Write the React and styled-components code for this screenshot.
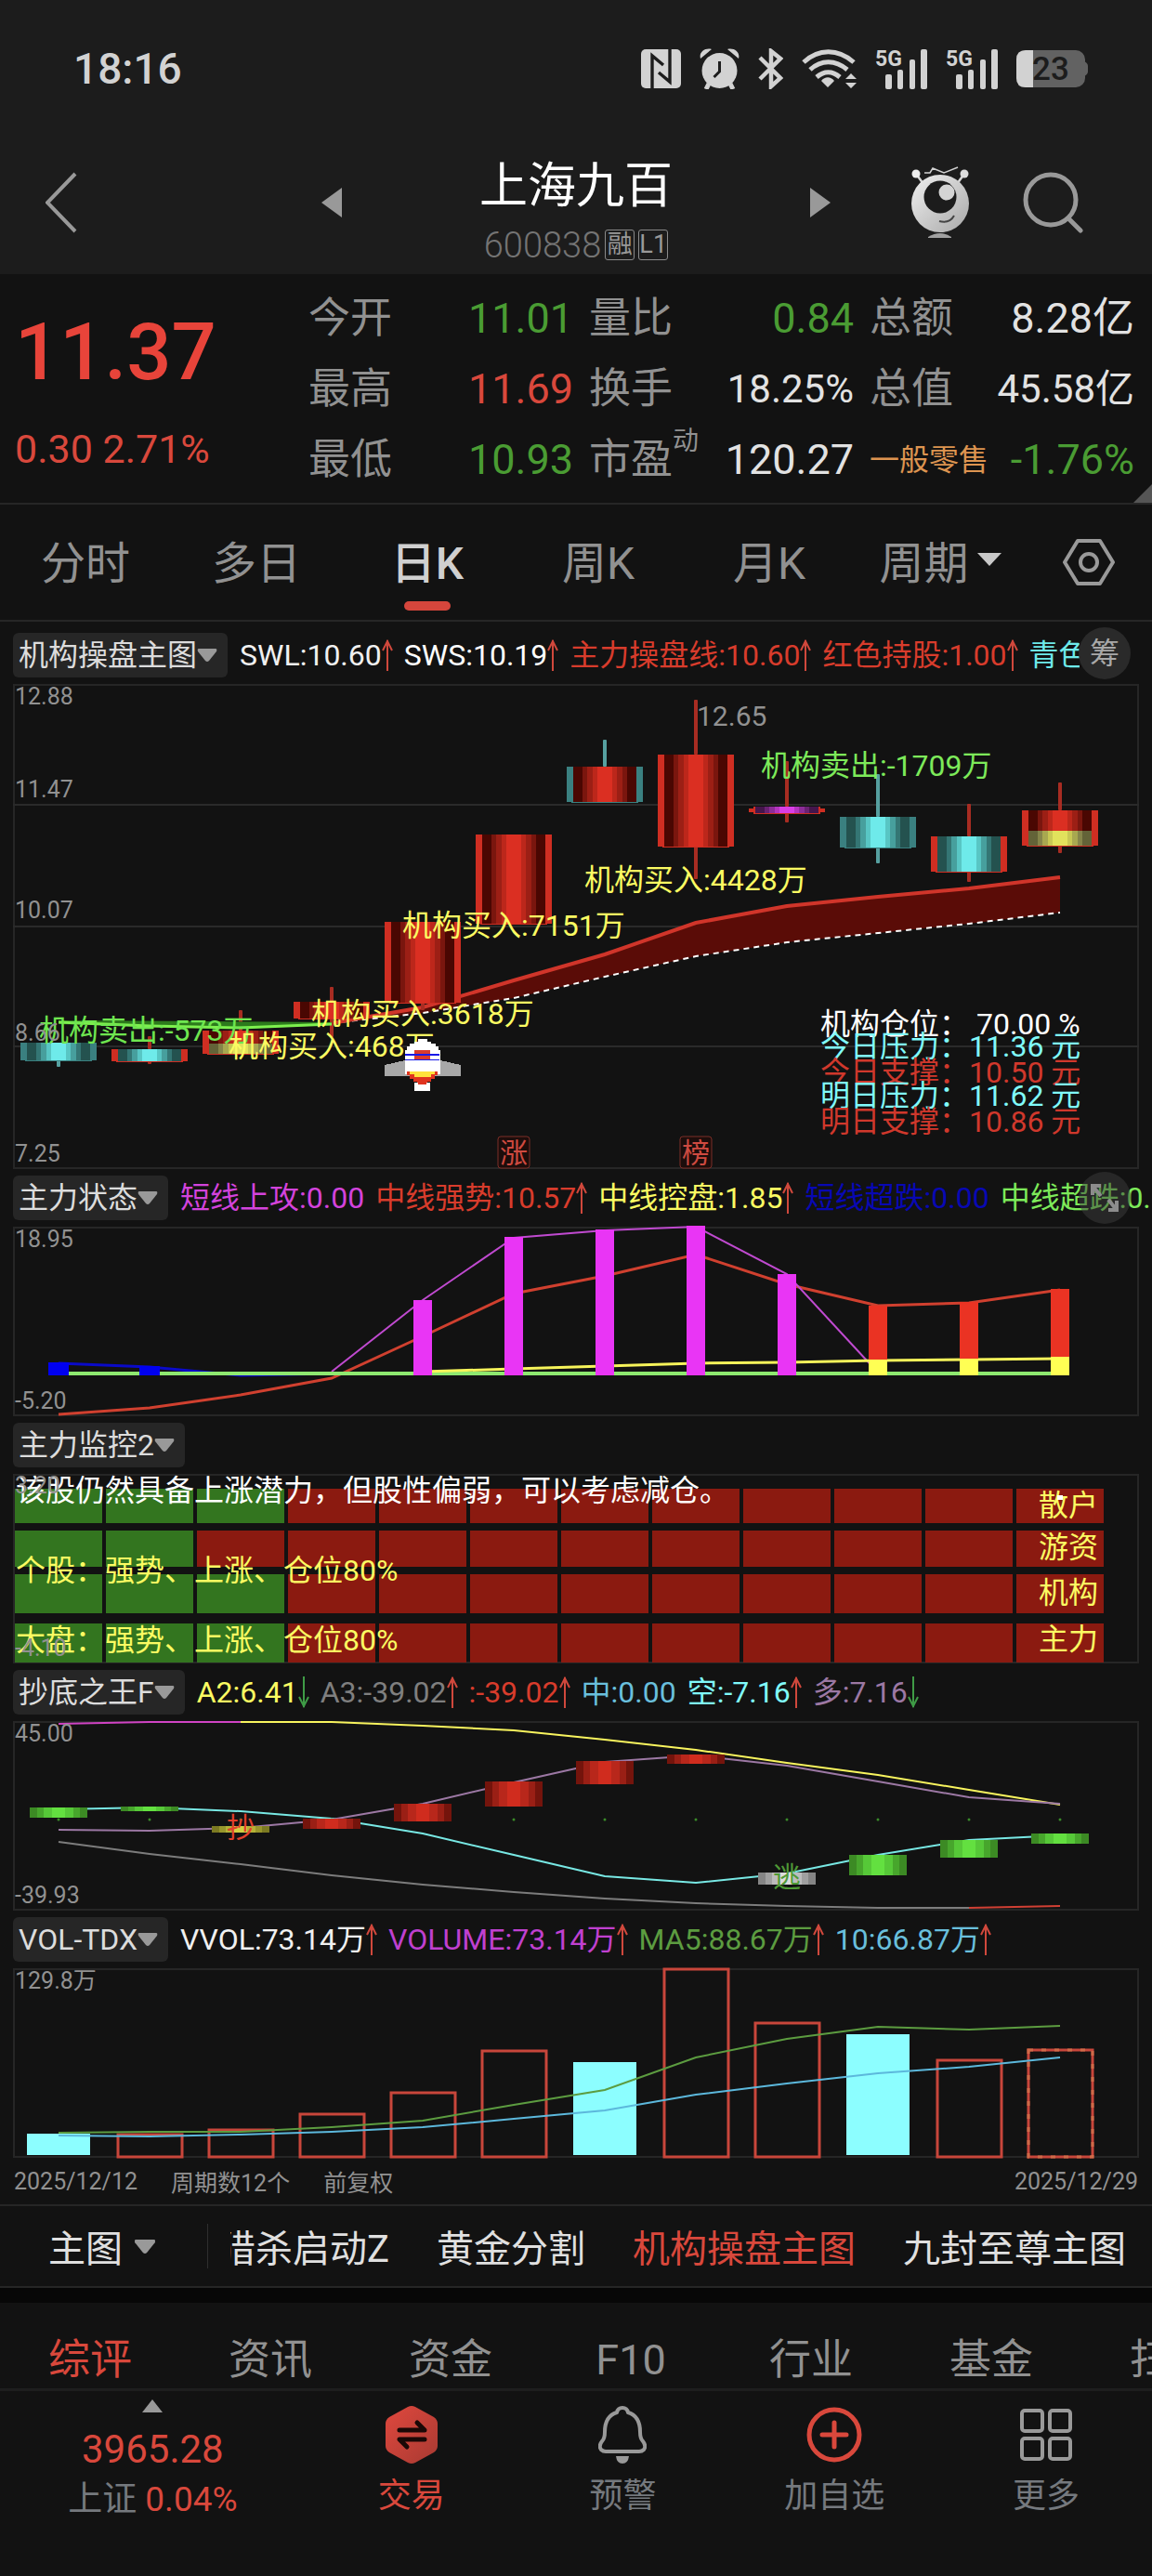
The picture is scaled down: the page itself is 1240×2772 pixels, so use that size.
import React, { useState } from 'react';
import styled, { createGlobalStyle } from 'styled-components';

const RED = '#d9483c';
const GREEN = '#4a9c33';
const GRAY = '#919191';
const CYAN = '#6eeaea';
const YELLOW = '#fbfb62';

const GlobalStyle = createGlobalStyle`
  * {
    box-sizing: border-box;
  }
  body {
    margin: 0;
    background: #121212;
    color: #e6e6e6;
    font-family: Roboto, 'Noto Sans CJK SC', sans-serif;
  }
  button {
    border: 0;
    padding: 0;
    background: none;
    color: inherit;
    font: inherit;
    white-space: nowrap;
  }
  svg {
    display: block;
    flex: none;
  }
  dl, dt, dd, p, h1 {
    margin: 0;
    font-weight: 400;
  }
`;

/* ---------- data ---------- */

const quotes = [
  { label: '今开', value: '11.01', color: GREEN },
  { label: '量比', value: '0.84', color: GREEN },
  { label: '总额', value: '8.28亿' },
  { label: '最高', value: '11.69', color: RED },
  { label: '换手', value: '18.25%', small: true },
  { label: '总值', value: '45.58亿', small: true },
  { label: '最低', value: '10.93', color: GREEN },
  { label: '市盈', sup: '动', value: '120.27' },
  { label: '一般零售', sector: true, value: '-1.76%', color: GREEN },
];

const periods = ['分时', '多日', '日K', '周K', '月K', '周期'];
const presets = ['猎杀启动Z', '黄金分割', '机构操盘主图', '九封至尊主图'];
const sections = ['综评', '资讯', '资金', 'F10', '行业', '基金', '扫雷'];

const mainItems = [
  { text: 'SWL:10.60', color: '#f0f0f0', dir: 'up' },
  { text: 'SWS:10.19', color: '#ffffff', dir: 'up' },
  { text: '主力操盘线:10.60', color: '#d83c2c', dir: 'up' },
  { text: '红色持股:1.00', color: '#d83c2c', dir: 'up' },
  { text: '青色持币:0.00', color: CYAN },
];
const stateItems = [
  { text: '短线上攻:0.00', color: '#d343dc' },
  { text: '中线强势:10.57', color: '#d83c2c', dir: 'up' },
  { text: '中线控盘:1.85', color: YELLOW, dir: 'up' },
  { text: '短线超跌:0.00', color: '#0808b4' },
  { text: '中线超跌:0.00', color: '#7dea5a' },
];
const bottomItems = [
  { text: 'A2:6.41', color: YELLOW, dir: 'down' },
  { text: 'A3:-39.02', color: '#7f7f7f', dir: 'up' },
  { text: ':-39.02', color: '#d83c2c', dir: 'up' },
  { text: '中:0.00', color: '#69bfdc' },
  { text: '空:-7.16', color: '#80fafa', dir: 'up' },
  { text: '多:7.16', color: '#9c78a4', dir: 'down' },
];
const volItems = [
  { text: 'VVOL:73.14万', color: '#f0f0f0', dir: 'up' },
  { text: 'VOLUME:73.14万', color: '#c040d0', dir: 'up' },
  { text: 'MA5:88.67万', color: '#5c9c40', dir: 'up' },
  { text: '10:66.87万', color: '#69bfdc', dir: 'up' },
];

const ramps = {
  red: ['#4a0702', '#7a160e', '#9c1f15', '#bc271b', '#db2f22'],
  cyan: ['#24524f', '#347674', '#479f9d', '#58c6c4', '#6eeaea'],
  yellow: ['#636338', '#85854a', '#a8a850', '#c8c854', '#e2e25c'],
  magenta: ['#45164c', '#6a2272', '#8d2c98', '#b434be', '#d93ee6'],
};

const candles = [
  { edge: '#3a8080', top: 386, bottom: 405, low: 412, ramp: 'cyan' },
  { edge: '#cf2e22', top: 393, bottom: 406, high: 379, low: 409, ramp: 'cyan' },
  { edge: '#cf2e22', top: 373, bottom: 398, high: 351, ramp: 'red', split: 387 },
  { edge: '#cf2e22', top: 342, bottom: 360, high: 326, low: 380, ramp: 'red' },
  { edge: '#cf2e22', top: 256, bottom: 343, low: 351, ramp: 'red' },
  { edge: '#cf2e22', top: 162, bottom: 258, ramp: 'red' },
  { edge: '#3a8080', top: 89, bottom: 127, high: 60, ramp: 'red' },
  { edge: '#cf2e22', top: 76, bottom: 175, high: 17, low: 210, ramp: 'red' },
  { edge: '#cf2e22', top: 132, bottom: 139, high: 83, low: 149, ramp: 'magenta' },
  { edge: '#3a8080', top: 143, bottom: 176, high: 97, low: 193, ramp: 'cyan' },
  { edge: '#cf2e22', top: 164, bottom: 202, high: 129, low: 213, ramp: 'cyan' },
  { edge: '#cf2e22', top: 136, bottom: 174, high: 106, low: 182, ramp: 'red', split: 158 },
];

const swl = [365, 348, 319, 291, 257, 239, 229, 220, 208];
const sws = [365, 354, 338, 315, 293, 278, 268, 258, 246];

const stateBars = [
  { i: 0, top: 146, color: '#0000f0' },
  { i: 1, top: 150, color: '#0000f0' },
  { i: 4, top: 79, color: '#e935f5' },
  { i: 5, top: 11, color: '#e935f5' },
  { i: 6, top: 3, color: '#e935f5' },
  { i: 7, top: -1, color: '#e935f5' },
  { i: 8, top: 51, color: '#e935f5' },
  { i: 9, top: 85, color: '#ea3323', base: 143 },
  { i: 10, top: 81, color: '#ea3323', base: 142 },
  { i: 11, top: 67, color: '#ea3323', base: 140 },
];

const heat = [
  { y: 16, h: 37, green: 3, label: '散户', ly: 45 },
  { y: 61, h: 39, green: 2, label: '游资', ly: 90 },
  { y: 108, h: 42, green: 3, label: '机构', ly: 139 },
  { y: 161, h: 42, green: 3, label: '主力', ly: 189 },
];

const kingRamps = {
  green: ['#3c8a24', '#47a62c', '#56c838', '#63e040'],
  red: ['#74140c', '#9a1f15', '#b8271b', '#d02c1e'],
  yellow: ['#7c7a22', '#98962c', '#b4b236', '#d2d042'],
  gray: ['#858585', '#a0a0a0', '#bcbcbc', '#dcdcdc'],
};
const kingBars = [
  [93, 104, 'green'], [92, 97, 'green'], [113, 120, 'yellow'], [105, 116, 'red'],
  [89, 108, 'red'], [65, 92, 'red'], [43, 68, 'red'], [36, 46, 'red'],
  [163, 176, 'gray'], [144, 166, 'green'], [128, 147, 'green'], [121, 132, 'green'],
];

const volumes = [
  [178, true], [178], [173], [156], [133], [88], [101, true], [0], [58], [71, true], [98], [87],
];

/* ---------- chart helpers ---------- */

const cx = (i) => 49 + 98 * i;
const points = (values, start = 0) => values.map((v, i) => `${cx(start + i)},${v}`).join(' ');

function Stripes({ left, top, height, widths, colors }) {
  let x = left;
  return widths.map((w, i) => {
    const rect = <rect key={i} x={x} y={top} width={w} height={height} fill={colors[i]} shapeRendering="crispEdges" />;
    x += w;
    return rect;
  });
}

const mirror = (ramp) => [...ramp, ...ramp.slice(0, -1).reverse()];

function Candle({ i, edge, top, bottom, high, low, ramp, split }) {
  const mid = cx(i);
  const wick = edge === '#3a8080' ? '#56a0a0' : '#a82c22';
  const widths = [10, 5, 6, 5, 16, 5, 6, 5, 10];
  return (
    <g>
      {high !== undefined && <rect x={mid - 2} y={high} width="4" height={top - high} rx="1" fill={wick} />}
      {low !== undefined && <rect x={mid - 2} y={bottom} width="4" height={low - bottom} rx="1" fill={wick} />}
      <rect x={mid - 36} y={top} width="72" height={bottom - top + 1} fill={edge} />
      <rect x={mid - 41} y={ramp === 'magenta' ? top + 2 : top} width="82" height={ramp === 'magenta' ? 4 : bottom - top} fill={edge} />
      <Stripes left={mid - 34} top={top} height={bottom - top} widths={widths} colors={mirror(ramps[ramp])} />
      {split && <Stripes left={mid - 34} top={split} height={bottom - split} widths={widths} colors={mirror(ramps.yellow)} />}
    </g>
  );
}

/* ---------- icons ---------- */

const NfcIcon = () => (
  <svg width="43" height="42" viewBox="0 0 43 42">
    <rect width="43" height="42" rx="5" fill="#d2d2d2" />
    <path d="M12 42V7l12 10M31 0v35L19 25" fill="none" stroke="#1c1c1c" strokeWidth="3.4" />
  </svg>
);

const AlarmIcon = () => (
  <svg width="43" height="44" viewBox="0 0 43 44" fill="#d2d2d2">
    <circle cx="21.500" cy="24" r="19" />
    <path d="M1 11C-1 4 6-1 13 1zM42 11C44 4 37-1 30 1z" />
    <path d="M10 38l-3 6M33 38l3 6" stroke="#d2d2d2" strokeWidth="5" />
    <path d="M21.500 14v11l-6 6" fill="none" stroke="#1c1c1c" strokeWidth="3" />
  </svg>
);

const BluetoothIcon = () => (
  <svg width="27" height="44" viewBox="0 0 27 44" fill="none" stroke="#d2d2d2" strokeWidth="4.500">
    <path d="M2 10l22 22-10 9V3l10 8L2 33" />
  </svg>
);

const WifiIcon = () => (
  <svg width="59" height="42" viewBox="0 0 59 42" fill="none" stroke="#d2d2d2" strokeWidth="5">
    <path d="M2 14C18-1 39-1 56 14M9 22c12-11 27-11 40 0M16 30c8-7 17-7 25 0" />
    <path d="M28 41l-7-7c4-5 10-5 14 0zM47 32l6-6 6 6zM47 36l6 6 6-6z" fill="#d2d2d2" stroke="none" />
  </svg>
);

const SignalIcon = () => (
  <Signal width="56" height="43" viewBox="0 0 56 43" fill="#d2d2d2">
    <text x="0" y="18" fontSize="23" fontWeight="700">5G</text>
    <rect x="11" y="27" width="7" height="16" rx="2" />
    <rect x="24" y="22" width="6" height="21" rx="2" />
    <rect x="37" y="11" width="6" height="32" rx="2" />
    <rect x="49" y="0" width="7" height="43" rx="2" />
  </Signal>
);

const BatteryIcon = () => (
  <svg width="77" height="40" viewBox="0 0 77 40">
    <rect width="74" height="40" rx="10" fill="#626262" />
    <path d="M73 12q4 2 4 5v6q0 3-4 5z" fill="#626262" />
    <path d="M18 0v40h-8Q0 40 0 30V10Q0 0 10 0z" fill="#d2d2d2" />
    <text x="17" y="32" fontSize="35" fontWeight="500" fill="#1c1c1c">23</text>
  </svg>
);

const BackIcon = () => (
  <svg width="34" height="66" viewBox="0 0 34 66">
    <path d="M32 2L2 33l30 31" fill="none" stroke="#999" strokeWidth="4" />
  </svg>
);

const RobotIcon = () => (
  <svg width="63" height="78" viewBox="0 0 63 78">
    <defs>
      <linearGradient id="shell" x1="0" y1="0" x2="1" y2="1">
        <stop offset="0" stopColor="#f0f0f0" />
        <stop offset="1" stopColor="#a8a8a8" />
      </linearGradient>
    </defs>
    <path d="M14 7h6l3-5 12 5L50 1" fill="none" stroke="#d0d0d0" strokeWidth="1.500" />
    <path d="M5 8l8 11M57 8l-8 11" stroke="#d8d8d8" strokeWidth="2.500" />
    <circle cx="5" cy="8" r="4.500" fill="#eee" />
    <circle cx="57" cy="8" r="4.500" fill="#ddd" />
    <circle cx="31" cy="40" r="31" fill="url(#shell)" />
    <circle cx="31" cy="33" r="17.500" fill="#1c1c1c" />
    <circle cx="38" cy="28" r="8.500" fill="#d4d4d4" />
    <path d="M30 59q11 3 16-6" fill="none" stroke="#444" strokeWidth="2" />
    <path d="M18 76q13-8 25 0v1H18z" fill="#a0a0a0" />
  </svg>
);

const SearchIcon = () => (
  <svg width="66" height="66" viewBox="0 0 66 66" fill="none" stroke="#999" strokeWidth="5" strokeLinecap="round">
    <circle cx="30" cy="30" r="27" />
    <path d="M49 50l13 13" />
  </svg>
);

const Triangle = ({ width = 24, height = 14, dir = 'down', color = '#999' }) => {
  const d = {
    down: `M0 0H${width}L${width / 2} ${height}z`,
    up: `M0 ${height}H${width}L${width / 2} 0z`,
    left: `M${width} 0V${height}L0 ${height / 2}z`,
    right: `M0 0V${height}L${width} ${height / 2}z`,
  }[dir];
  return (
    <svg width={width} height={height} viewBox={`0 0 ${width} ${height}`}>
      <path d={d} fill={color} />
    </svg>
  );
};

const Caret = ({ width = 22, height = 14 }) => (
  <svg width={width} height={height} viewBox="0 0 22 14">
    <path d="M2 0H20Q22 0 21 3L13 13Q11 15 9 13L1 3Q0 0 2 0z" fill="#999" />
  </svg>
);

const GearIcon = () => (
  <svg width="56" height="50" viewBox="0 0 56 50" fill="none" stroke="#999" strokeWidth="4">
    <path d="M16 2h24l14 23-14 23H16L2 25z" strokeLinejoin="round" />
    <circle cx="28" cy="25" r="9" />
  </svg>
);

const Arrow = ({ dir }) => (
  <svg width="12" height="34" viewBox="0 0 12 34" fill="none" stroke={dir === 'up' ? '#d0483c' : '#3f9c46'} strokeWidth="2">
    {dir === 'up' ? <path d="M6 34V1M1 12L6 2l5 10" /> : <path d="M6 0v33M1 22l5 10 5-10" />}
  </svg>
);

const ExpandIcon = () => (
  <svg width="30" height="30" viewBox="0 0 30 30" fill="none" stroke="#8c8c8c" strokeWidth="4">
    <path d="M2 12V2h9M28 18v10h-9M2 2l9 11M28 28l-9-11" />
  </svg>
);

const TradeIcon = () => (
  <svg width="56" height="62" viewBox="0 0 56 62">
    <defs>
      <linearGradient id="trade" x1="0" y1="0" x2="1" y2="1">
        <stop offset="0" stopColor="#e0483e" />
        <stop offset="1" stopColor="#a83a32" />
      </linearGradient>
    </defs>
    <path d="M24 1q4-2 8 0l20 11q4 3 4 7v24q0 4-4 7L32 61q-4 2-8 0L4 50q-4-3-4-7V19q0-4 4-7z" fill="url(#trade)" />
    <path d="M15 26h27L34 18M42 36H15l8 8" fill="none" stroke="#1a0806" strokeWidth="5" strokeLinecap="round" strokeLinejoin="round" />
  </svg>
);

const BellIcon = () => (
  <svg width="52" height="62" viewBox="0 0 52 62">
    <path
      d="M26 2q-5 0-6 5Q7 11 7 28q0 7-3 10-4 5-1 9 2 2 5 2h36q3 0 5-2 3-4-1-9-3-3-3-10 0-17-13-21-1-5-6-5z"
      fill="none" stroke="#999" strokeWidth="4" strokeLinejoin="round"
    />
    <path d="M19 54h14q-1 8-7 8t-7-8z" fill="#999" />
  </svg>
);

const AddIcon = () => (
  <svg width="60" height="60" viewBox="0 0 60 60" fill="none" stroke={RED} strokeWidth="5" strokeLinecap="round">
    <circle cx="30" cy="30" r="27" />
    <path d="M30 17v26M17 30h26" />
  </svg>
);

const MoreIcon = () => (
  <svg width="56" height="56" viewBox="0 0 56 56" fill="none" stroke="#999" strokeWidth="4">
    <rect x="2" y="2" width="22" height="22" rx="3" />
    <rect x="32" y="2" width="22" height="22" rx="3" />
    <rect x="2" y="32" width="22" height="22" rx="3" />
    <rect x="32" y="32" width="22" height="22" rx="3" />
  </svg>
);

/* ---------- charts ---------- */

function Frame({ height, children, label }) {
  return (
    <Chart viewBox={`0 0 1212 ${height}`} role="img" aria-label={label}>
      <rect x="1" y="1" width="1210" height={height - 2} fill="none" stroke="#262626" strokeWidth="2" />
      {children}
    </Chart>
  );
}

function MainChart() {
  const band = [...swl.map((v, i) => [cx(i + 3), v]), ...sws.map((v, i) => [cx(i + 3), v]).reverse()];
  return (
    <Frame height={522} label="机构操盘主图">
      {[130, 261, 390].map((y) => <path key={y} d={`M0 ${y}H1212`} stroke="#2a2a2a" strokeWidth="2" />)}
      <polygon points={band.map((p) => p.join(',')).join(' ')} fill="#5a0c07" />
      <polyline points={points(sws, 3)} fill="none" stroke="#fff" strokeWidth="2" strokeDasharray="6 5" />
      <polyline points={points(swl, 3)} fill="none" stroke="#d0352a" strokeWidth="4" />
      {candles.map((c, i) => <Candle key={i} i={i} {...c} />)}
      <polygon points="49,362 343,364 343,367 245,371 147,369 49,366" fill="#2c7a1c" />
      <polyline points={points([364, 368, 370, 366])} fill="none" stroke="#7df04e" strokeWidth="3" />
      <Price x="736" y="45">12.65</Price>
      <Note x="28" y="384" fill="#6fe650">机构卖出:-573万</Note>
      <Note x="232" y="401" fill={YELLOW}>机构买入:468万</Note>
      <Note x="321" y="366" fill={YELLOW}>机构买入:3618万</Note>
      <Note x="419" y="271" fill={YELLOW}>机构买入:7151万</Note>
      <Note x="615" y="222" fill={YELLOW}>机构买入:4428万</Note>
      <Note x="805" y="99" fill="#7dea5a">机构卖出:-1709万</Note>
      <g shapeRendering="crispEdges">
        <path d="M400 410L422 405H460L482 410V422H400z" fill="#a8a8a8" />
        <path d="M436 382h10v3h4v2h5v3h3v4h2v26H422V394h2v-4h3v-3h5v-2h4z" fill="#fff" />
        <rect x="432" y="394" width="17" height="11" fill="#d83a2c" />
        <rect x="422" y="398" width="37" height="2" fill="#1818e8" />
        <rect x="422" y="404" width="37" height="1" fill="#1818e8" />
        <path d="M424 417h33v4h-3v4h-4v3h-4v3h-11v-3h-4v-3h-4v-4h-3z" fill="#e0341f" />
        <path d="M427 417h27v3h-4v3h-18v-3h-5z" fill="#ffe23c" />
        <path d="M432 429h4v2h9v-2h4v9h-17z" fill="#fff" />
      </g>
      <Note x="869" y="377" fill="#ffffff">机构仓位： 70.00 %</Note>
      <Note x="869" y="401" fill="#80fafa">今日压力：11.36 元</Note>
      <Note x="869" y="429" fill="#d0382c">今日支撑：10.50 元</Note>
      <Note x="869" y="454" fill="#80fafa">明日压力：11.62 元</Note>
      <Note x="869" y="482" fill="#d0382c">明日支撑：10.86 元</Note>
      {[['涨', 5], ['榜', 7]].map(([t, i]) => (
        <g key={t}>
          <rect x={cx(i) - 17} y="487" width="34" height="34" rx="3" fill="#1d0d0b" stroke="#7c2e28" strokeWidth="1" />
          <text x={cx(i)} y="515" fontSize="30" textAnchor="middle" fill="#cf4a40">{t}</text>
        </g>
      ))}
      <Axis x="2" y="22">12.88</Axis>
      <Axis x="2" y="122">11.47</Axis>
      <Axis x="2" y="252">10.07</Axis>
      <Axis x="2" y="384">8.66</Axis>
      <Axis x="2" y="514">7.25</Axis>
    </Frame>
  );
}

function StateChart() {
  return (
    <Frame height={204} label="主力状态">
      <polyline points={points([202, 195, 181, 163, 118, 72, 53, 30, 62, 85, 82, 68])} fill="none" stroke="#d0402f" strokeWidth="3" />
      <polyline points={points([156, 79, 12, 4, 0, 51, 157], 3)} fill="none" stroke="#c04ad0" strokeWidth="2" />
      <polyline points={points([147, 151, 160, 158])} fill="none" stroke="#0a0ac8" strokeWidth="3" />
      <path d="M59 158H1127" stroke="#8ee870" strokeWidth="4" />
      <polyline points={points([156, 153, 150, 147, 146, 144, 143, 142], 4)} fill="none" stroke="#f6f45a" strokeWidth="3" />
      {stateBars.map((b) => (
        <g key={b.i}>
          <rect x={cx(b.i) - (b.i < 2 ? 11 : 10)} y={b.top} width={b.i < 2 ? 22 : 20} height={160 - b.top} fill={b.color} />
          {b.base && <rect x={cx(b.i) - 10} y={b.base} width="20" height={160 - b.base} fill="#ffff54" />}
        </g>
      ))}
      <Axis x="2" y="22">18.95</Axis>
      <Axis x="2" y="196">-5.20</Axis>
    </Frame>
  );
}

function MonitorChart() {
  return (
    <Frame height={204} label="主力监控2">
      {heat.map((row) => (
        <g key={row.label}>
          {candles.map((_, i) => (
            <rect key={i} x={2 + 98 * i} y={row.y} width="94" height={row.h} fill={i < row.green ? '#33751f' : '#8b1a10'} />
          ))}
          <Note x="1104" y={row.ly} fill={YELLOW}>{row.label}</Note>
        </g>
      ))}
      <rect x="1124" y="23" width="6" height="5" fill="#fff" />
      <Note x="3" y="29" fill="#ffffff">该股仍然具备上涨潜力，但股性偏弱，可以考虑减仓。</Note>
      <Note x="3" y="115" fill={YELLOW}>个股：强势、上涨、仓位80%</Note>
      <Note x="3" y="190" fill={YELLOW}>大盘：强势、上涨、仓位80%</Note>
      <Axis x="2" y="21">3.20</Axis>
      <Axis x="2" y="196">-4.10</Axis>
    </Frame>
  );
}

function KingChart() {
  return (
    <Frame height={204} label="抄底之王F">
      <polyline points={points([130, 143, 154, 166, 176, 184, 191, 196, 199, 201, 201])} fill="none" stroke="#7c7c7c" strokeWidth="2" />
      <polyline points={points([201, 199], 10)} fill="none" stroke="#d04034" strokeWidth="2" />
      <polyline points={points([3, 1, 1])} fill="none" stroke="#d043c4" strokeWidth="2" />
      <polyline points={points([1, 1, 5, 10, 20, 31, 45, 58, 74, 90], 2)} fill="none" stroke="#f8f45e" strokeWidth="2" />
      <polyline points={points([117, 118, 115, 106, 89, 66, 44, 37, 48, 65, 82, 89])} fill="none" stroke="#9c78a4" strokeWidth="2" />
      <polyline points={points([95, 93, 97, 105, 121, 144, 167, 174, 164, 144, 128, 123])} fill="none" stroke="#78e8e4" strokeWidth="2" />
      {kingBars.map(([top, bottom, ramp], i) => (
        <g key={i}>
          <circle cx={cx(i)} cy="106" r="1.500" fill="#3a8a2a" />
          <Stripes left={cx(i) - 31} top={top} height={bottom - top} widths={[8, 7, 9, 14, 9, 7, 8]} colors={mirror(kingRamps[ramp])} />
        </g>
      ))}
      <text x={cx(2)} y="125" fontSize="30" textAnchor="middle" fill="#e0402c">抄</text>
      <text x={cx(8)} y="178" fontSize="30" textAnchor="middle" fill="#4f9a36">逃</text>
      <Axis x="2" y="22">45.00</Axis>
      <Axis x="2" y="196">-39.93</Axis>
    </Frame>
  );
}

function VolumeChart() {
  return (
    <Frame height={204} label="VOL-TDX">
      {volumes.map(([top, filled], i) => {
        if (filled) return <rect key={i} x={cx(i) - 34} y={top} width="68" height={201 - top} fill="#8cfeff" />;
        return (
          <g key={i} fill="none" strokeWidth="3">
            <rect x={cx(i) - 34} y={top + 1} width="69" height={202 - top} stroke="#c8463b" />
            {i === 11 && <rect x={cx(i) - 34} y={top + 1} width="69" height={202 - top} stroke="#cf6a48" strokeDasharray="5 9" />}
          </g>
        );
      })}
      <polyline points={points([177, 176, 176, 171, 164, 147, 131, 96, 76, 63, 66, 62])} fill="none" stroke="#5c9c40" strokeWidth="2" />
      <polyline points={points([180, 181, 179, 176, 171, 162, 153, 136, 124, 113, 106, 96])} fill="none" stroke="#5cb8dc" strokeWidth="2" />
      <Axis x="2" y="22">129.8万</Axis>
    </Frame>
  );
}

function Panel({ title, items, clip, first, overlay, children }) {
  return (
    <section>
      <PanelHead $first={first}>
        <Chip type="button">
          {title}
          <Caret />
        </Chip>
        <Items $clip={clip}>
          {(items || []).map((item) => (
            <Item key={item.text} $color={item.color}>
              {item.text}
              {item.dir && <Arrow dir={item.dir} />}
            </Item>
          ))}
        </Items>
        {overlay}
      </PanelHead>
      <ChartWrap>{children}</ChartWrap>
    </section>
  );
}

export default function App() {
  const [period, setPeriod] = useState('日K');
  const [preset, setPreset] = useState('机构操盘主图');
  const [section, setSection] = useState('综评');

  return (
    <>
      <GlobalStyle />
      <Top>
        <StatusBar>
          <Clock>18:16</Clock>
          <StatusIcons>
            <NfcIcon />
            <AlarmIcon />
            <BluetoothIcon />
            <WifiIcon />
            <SignalIcon />
            <SignalIcon />
            <BatteryIcon />
          </StatusIcons>
        </StatusBar>
        <Header>
          <HeaderSide>
            <button type="button" aria-label="返回"><BackIcon /></button>
          </HeaderSide>
          <HeaderCenter>
            <button type="button" aria-label="上一只"><Triangle width={22} height={32} dir="left" /></button>
            <Title>
              <h1>上海九百</h1>
              <Code>
                600838 <Badge>融</Badge><Badge>L1</Badge>
              </Code>
            </Title>
            <button type="button" aria-label="下一只"><Triangle width={22} height={32} dir="right" /></button>
          </HeaderCenter>
          <HeaderSide $end>
            <button type="button" aria-label="助手"><RobotIcon /></button>
            <button type="button" aria-label="搜索"><SearchIcon /></button>
          </HeaderSide>
        </Header>
      </Top>

      <Quote>
        <div>
          <Last>11.37</Last>
          <Change>0.30 2.71%</Change>
        </div>
        <QuoteGrid>
          {quotes.map((q) => (
            <QuoteCell key={q.label}>
              <QuoteLabel $sector={q.sector}>
                {q.label}
                {q.sup && <sup>{q.sup}</sup>}
              </QuoteLabel>
              <QuoteValue $color={q.color} $small={q.small}>{q.value}</QuoteValue>
            </QuoteCell>
          ))}
        </QuoteGrid>
        <Corner />
      </Quote>

      <Periods>
        {periods.map((p) => (
          <Period key={p} type="button" $active={p === period} onClick={() => setPeriod(p)}>
            {p}
            {p === '周期' && <Triangle width={26} height={14} color="#c8c8c8" />}
          </Period>
        ))}
        <Settings type="button" aria-label="设置"><GearIcon /></Settings>
      </Periods>

      <Panel title="机构操盘主图" items={mainItems} clip first overlay={<Round type="button">筹</Round>}>
        <MainChart />
      </Panel>
      <Panel title="主力状态" items={stateItems} overlay={<Round type="button" $ghost aria-label="展开"><ExpandIcon /></Round>}>
        <StateChart />
      </Panel>
      <Panel title="主力监控2"><MonitorChart /></Panel>
      <Panel title="抄底之王F" items={bottomItems}><KingChart /></Panel>
      <Panel title="VOL-TDX" items={volItems}><VolumeChart /></Panel>

      <Dates>
        <span>2025/12/12</span>
        <span>周期数12个</span>
        <span>前复权</span>
        <span>2025/12/29</span>
      </Dates>

      <Presets>
        <PresetMenu type="button">主图<Caret width={24} height={15} /></PresetMenu>
        <PresetScroll>
          <PresetTrack>
            {presets.map((p) => (
              <Preset key={p} type="button" $active={p === preset} onClick={() => setPreset(p)}>{p}</Preset>
            ))}
          </PresetTrack>
        </PresetScroll>
      </Presets>

      <Sections>
        {sections.map((s) => (
          <SectionTab key={s} type="button" $active={s === section} onClick={() => setSection(s)}>{s}</SectionTab>
        ))}
      </Sections>

      <BottomBar>
        <IndexButton type="button">
          <Triangle width={22} height={14} dir="up" />
          <IndexValue>3965.28</IndexValue>
          <IndexName>上证 <b>0.04%</b></IndexName>
        </IndexButton>
        <Action type="button" $active><TradeIcon />交易</Action>
        <Action type="button"><BellIcon />预警</Action>
        <Action type="button"><AddIcon />加自选</Action>
        <Action type="button"><MoreIcon />更多</Action>
      </BottomBar>
    </>
  );
}

/* ---------- styles ---------- */

const Top = styled.header`
  background: #1c1c1c;
`;

const StatusBar = styled.div`
  height: 140px;
  padding: 8px 69px 0 79px;
  display: flex;
  align-items: center;
  justify-content: space-between;
`;

const Clock = styled.span`
  font-size: 46px;
  font-weight: 500;
  color: #d2d2d2;
`;

const StatusIcons = styled.div`
  display: flex;
  align-items: center;
  gap: 20px;
`;

const Signal = styled.svg`
  overflow: visible;
`;

const Header = styled.div`
  height: 155px;
  display: grid;
  grid-template-columns: 1fr 548px 1fr;
  align-items: center;
`;

const HeaderSide = styled.div`
  display: flex;
  align-items: center;
  gap: 57px;
  padding: 0 73px 0 49px;
  justify-content: ${(p) => (p.$end ? 'flex-end' : 'flex-start')};
`;

const HeaderCenter = styled.div`
  display: flex;
  align-items: center;
  justify-content: space-between;
`;

const Title = styled.div`
  padding-top: 26px;
  display: flex;
  flex-direction: column;
  align-items: center;
  h1 {
    font-size: 52px;
    line-height: 66px;
    color: #fff;
  }
`;

const Code = styled.p`
  display: flex;
  align-items: center;
  gap: 4px;
  font-size: 38px;
  font-weight: 300;
  line-height: 60px;
  color: #747474;
`;

const Badge = styled.span`
  min-width: 32px;
  height: 33px;
  border: 1px solid #8a8a8a;
  border-radius: 3px;
  text-align: center;
  font-size: 27px;
  font-weight: 400;
  line-height: 31px;
  color: #999;
`;

const Quote = styled.section`
  position: relative;
  display: grid;
  grid-template-columns: 316px 1fr;
  padding: 10px 19px 8px 16px;
  border-bottom: 2px solid #262626;
`;

const Last = styled.p`
  font-size: 85px;
  font-weight: 500;
  line-height: 148px;
  color: #e8443a;
`;

const Change = styled.p`
  font-size: 43px;
  line-height: 60px;
  color: ${RED};
`;

const QuoteGrid = styled.dl`
  display: grid;
  grid-template-columns: repeat(3, 1fr);
  column-gap: 17px;
`;

const QuoteCell = styled.div`
  display: flex;
  align-items: center;
  justify-content: space-between;
  height: 76px;
  white-space: nowrap;
`;

const QuoteLabel = styled.dt`
  font-size: ${(p) => (p.$sector ? 32 : 45)}px;
  line-height: 76px;
  color: ${(p) => (p.$sector ? '#dd9450' : GRAY)};
  display: flex;
  sup {
    font-size: 28px;
    line-height: 36px;
  }
`;

const QuoteValue = styled.dd`
  font-size: ${(p) => (p.$small ? 42 : 45)}px;
  line-height: 76px;
  color: ${(p) => p.$color || '#e2e2e2'};
`;

const Corner = styled.span`
  position: absolute;
  right: 0;
  bottom: 0;
  width: 20px;
  height: 20px;
  clip-path: polygon(100% 0, 100% 100%, 0 100%);
  background: #555;
`;

const Periods = styled.nav`
  display: grid;
  grid-template-columns: repeat(6, 23fr) 17fr;
  height: 126px;
  border-bottom: 2px solid #262626;
`;

const Period = styled.button`
  position: relative;
  display: flex;
  align-items: center;
  justify-content: center;
  gap: 9px;
  padding-bottom: 6px;
  font-size: 48px;
  color: ${(p) => (p.$active ? '#d0d0d0' : GRAY)};
  font-weight: ${(p) => (p.$active ? 500 : 400)};
  &::after {
    content: '';
    display: ${(p) => (p.$active ? 'block' : 'none')};
    position: absolute;
    bottom: 10px;
    width: 50px;
    height: 10px;
    border-radius: 5px;
    background: #d5463c;
  }
`;

const Settings = styled.button`
  display: flex;
  align-items: center;
  justify-content: center;
`;

const PanelHead = styled.div`
  position: relative;
  display: flex;
  align-items: center;
  gap: 13px;
  height: ${(p) => (p.$first ? 67 : 62)}px;
  padding-left: 14px;
  padding-top: ${(p) => (p.$first ? 4 : 0)}px;
  font-size: 32px;
  line-height: 48px;
`;

const Chip = styled.button`
  display: flex;
  align-items: center;
  flex: none;
  height: 48px;
  padding: 0 11px 0 6px;
  border-radius: 6px;
  background: #262626;
  color: #dcdcdc;
`;

const Items = styled.div`
  display: flex;
  flex: 1;
  min-width: 0;
  gap: 12px;
  overflow: hidden;
  margin-right: ${(p) => (p.$clip ? 78 : 0)}px;
`;

const Item = styled.span`
  display: flex;
  align-items: center;
  flex: none;
  white-space: nowrap;
  color: ${(p) => p.$color};
`;

const Round = styled.button`
  position: absolute;
  right: 23px;
  top: 50%;
  margin-top: -28px;
  display: flex;
  align-items: center;
  justify-content: center;
  width: 56px;
  height: 56px;
  border-radius: 50%;
  background: ${(p) => (p.$ghost ? 'rgba(60, 60, 60, 0.5)' : '#2a2a2a')};
  font-size: 32px;
  color: #a8a8a8;
`;

const ChartWrap = styled.div`
  padding: 0 14px;
`;

const Chart = styled.svg`
  width: 100%;
  overflow: visible;
`;

const Axis = styled.text`
  font-size: 25px;
  fill: ${GRAY};
`;

const Price = styled.text`
  font-size: 30px;
  fill: ${GRAY};
`;

const Note = styled.text`
  font-size: 32px;
  white-space: pre;
`;

const Dates = styled.div`
  display: flex;
  align-items: center;
  gap: 36px;
  height: 50px;
  padding: 0 15px;
  font-size: 25px;
  color: ${GRAY};
  span:last-child {
    margin-left: auto;
  }
`;

const Presets = styled.div`
  display: flex;
  align-items: center;
  height: 90px;
  border-top: 2px solid #262626;
  border-bottom: 2px solid #262626;
  font-size: 40px;
  color: #e0e0e0;
`;

const PresetMenu = styled.button`
  display: flex;
  align-items: center;
  flex: none;
  gap: 12px;
  width: 224px;
  height: 48px;
  padding-left: 52px;
  border-right: 1px solid #2e2e2e;
`;

const PresetScroll = styled.div`
  flex: 1;
  min-width: 0;
  margin-left: 24px;
  overflow: hidden;
`;

const PresetTrack = styled.div`
  display: flex;
  gap: 51px;
  margin-left: -13px;
`;

const Preset = styled.button`
  flex: none;
  color: ${(p) => (p.$active ? RED : 'inherit')};
`;

const Sections = styled.nav`
  display: flex;
  height: 111px;
  padding-top: 32px;
  overflow: hidden;
  border-top: 16px solid #070707;
  border-bottom: 3px solid #1e1e1e;
`;

const SectionTab = styled.button`
  flex: 0 0 194px;
  font-size: 45px;
  line-height: 60px;
  color: ${(p) => (p.$active ? RED : GRAY)};
`;

const BottomBar = styled.footer`
  display: grid;
  grid-template-columns: 329fr 228fr 228fr 228fr 228fr;
  height: 200px;
`;

const IndexButton = styled.button`
  display: flex;
  flex-direction: column;
  align-items: center;
  padding-top: 9px;
  color: ${RED};
`;

const IndexValue = styled.span`
  margin-top: 10px;
  font-size: 42px;
  line-height: 60px;
`;

const IndexName = styled.span`
  font-size: 37px;
  line-height: 48px;
  color: #75797e;
  b {
    font-weight: 400;
    color: ${RED};
  }
`;

const Action = styled.button`
  display: flex;
  flex-direction: column;
  align-items: center;
  padding-top: 16px;
  font-size: 36px;
  line-height: 44px;
  color: ${(p) => (p.$active ? RED : '#75797e')};
  svg {
    height: 62px;
    margin-bottom: 13px;
  }
`;
